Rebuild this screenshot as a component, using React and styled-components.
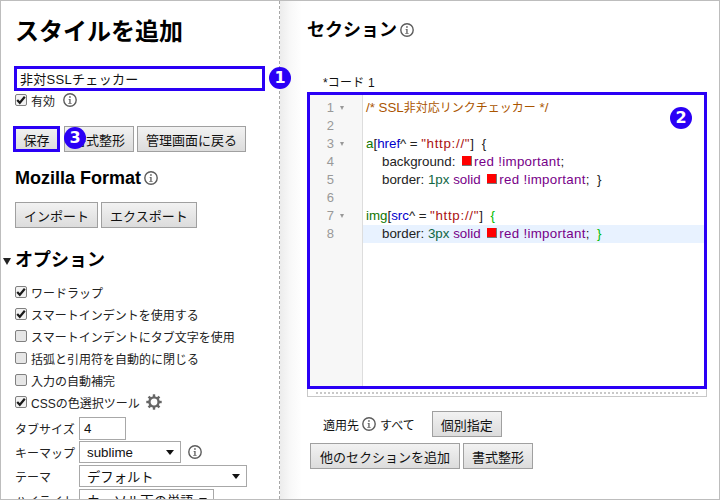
import React from "react";
import styled, { createGlobalStyle } from "styled-components";

const Global = createGlobalStyle`
  html, body { margin: 0; padding: 0; background: #fff; overflow: hidden; }
  body { font-family: "Liberation Sans", "Noto Sans CJK JP", Arial, sans-serif; font-size: 12px; color: #000; }
`;
const BLUE = "#2a00f5";

const Frame = styled.div`
  width: 720px; height: 500px; box-sizing: border-box; display: flex; overflow: hidden; position: relative;
  border: 1px solid #bdbdbd;
`;
const Side = styled.div`
  width: 279px; flex: none; box-sizing: border-box; height: 498px; overflow: hidden;
  border-right: 1px dashed #a8a8a8; padding: 0 0 0 14px; position: relative;
`;
const Main = styled.div`
  flex: 1; box-sizing: border-box; height: 498px; padding: 0 0 0 27px;
  background: linear-gradient(to right, #ececec 0, #f8f8f8 10px, #fff 22px);
`;
const Title = styled.h1`
  margin: 0; font-size: 24px; line-height: 32px; padding-top: 15px; font-weight: 700;
`;
const NameInput = styled.input`
  display: block; box-sizing: border-box; width: 251px; height: 25px; padding: 0 0 1px 3px; margin: 18px 0 0 -1px;
  font: 13px "Liberation Sans", "Noto Sans CJK JP", sans-serif; letter-spacing: 0.3px; color: #111;
  border: 3px solid ${BLUE}; outline: 0; background: #fff;
`;
const CheckRow = styled.div`
  display: flex; align-items: center; height: ${p => p.$h || 22}px; color: #222; white-space: nowrap;
`;
const Box = styled.span`
  width: 10px; height: 10px; flex: none; margin-right: 4px; border: 1px solid #808080; border-radius: 2px;
  background: ${p => (p.$on ? "#f2f2f2" : "#e6e6e6")}; display: flex; align-items: center; justify-content: center;
`;
const Gap = styled.span`width: ${p => p.$w}px; flex: none;`;
const Buttons = styled.div`
  display: flex; gap: 3px; margin-top: ${p => p.$mt || 0}px; margin-left: ${p => p.$ml || 0}px;
`;
const Button = styled.button`
  box-sizing: border-box; height: 26px; padding: 0 ${p => p.$pad || 8}px; margin: 0; color: #111; white-space: nowrap;
  font: 13px "Liberation Sans", "Noto Sans CJK JP", sans-serif;
  background: linear-gradient(#f2f2f2, #dcdcdc); border: 1px solid #a0a0a0; border-radius: 0;
`;
const SaveButton = styled(Button)`
  width: 47px; padding: 0; outline: 3px solid ${BLUE}; outline-offset: -3px;
  margin-right: 1px; margin-left: -2px;
`;
const H2 = styled.h2`
  margin: ${p => p.$mt || 0}px 0 0; font-size: 18px; line-height: 24px; font-weight: 700; display: flex; align-items: center; gap: 3px;
`;
const Caret = styled.span`
  position: absolute; left: 2px; top: 257px; width: 0; height: 0;
  border-left: 4px solid transparent; border-right: 4px solid transparent; border-top: 7px solid #222;
`;
const Spacer = styled.div`height: ${p => p.$h}px;`;
const FieldRow = styled.div`
  display: flex; align-items: center; height: 24px; color: #222; white-space: nowrap;
`;
const FieldLabel = styled.span`width: 64px; flex: none;`;
const NumberBox = styled.div`
  box-sizing: border-box; width: 47px; height: 23px; border: 1px solid #a8a8a8; padding: 0 4px; display: flex; align-items: center; color: #111; font-size: 13.33px;
`;
const Select = styled.div`
  box-sizing: border-box; width: ${p => p.$w}px; height: 22px; border: 1px solid #a8a8a8; padding: 0 6px 0 7px;
  display: flex; align-items: center; justify-content: space-between; color: #111; font-size: 13.33px; flex: none;
`;
const Tri = styled.span`
  width: 0; height: 0; border-left: 4.5px solid transparent; border-right: 4.5px solid transparent; border-top: 5px solid #111;
`;
const Badge = styled.span`
  position: absolute; left: ${p => p.$x}px; top: ${p => p.$y}px; width: 22px; height: 22px; border-radius: 50%;
  background: ${BLUE}; color: #fff; font-weight: 700; font-size: 16px; line-height: 22px; text-align: center;
  font-family: "DejaVu Sans", sans-serif; z-index: 3;
`;
const SectionTitle = styled(H2)`padding-top: 17px;`;
const CodeLabel = styled.div`margin-left: 16px; line-height: 14px; padding-top: 34px; color: #111; letter-spacing: 0.2px;`;
const EditorShell = styled.div`
  width: 400px; box-sizing: border-box; height: 305px; margin-top: 2px; border: 1px solid #c8c8c8; border-top: 0;
`;
const Editor = styled.div`
  box-sizing: border-box; height: 297px; width: 400px; margin-left: -1px; border: 3px solid ${BLUE}; display: flex; background: #fff;
`;
const Gutter = styled.div`
  width: 53px; flex: none; box-sizing: border-box; background: #f7f7f7; border-right: 1px solid #ddd; padding-top: 4px;
`;
const Num = styled.div`
  height: 18px; line-height: 18px; color: #999; position: relative; text-align: right; padding-right: 28px; font-size: 13px;
`;
const Fold = styled.span`
  position: absolute; left: 30px; top: 7px; width: 0; height: 0;
  border-left: 2.5px solid transparent; border-right: 2.5px solid transparent; border-top: 4px solid #999;
`;
const Code = styled.div`flex: 1; padding-top: 4px; min-width: 0;`;
const Line = styled.div`
  height: 18px; line-height: 18px; padding-left: ${p => (p.$indent ? 19 : 3)}px; white-space: pre; color: #222; font-size: 13.33px;
  background: ${p => (p.$active ? "#e8f2ff" : "transparent")};
`;
const T = styled.span`color: ${p => p.$c || "inherit"}; letter-spacing: ${p => p.$ls || 0}px;`;
const Cjk = styled.span`font-size: 12px;`;
const Swatch = styled.span`
  display: inline-block; width: 9px; height: 9px; background: #f00; border: 0 solid #777; border-width: 0 1px 1px 0; margin: 0 2px 0 3px;
`;
const Resizer = styled.div`
  margin: 3px 8px 0; border-top: 2px dotted #c8c8c8;
`;
const Apply = styled.div`
  display: flex; align-items: center; margin: 14px 0 0 16px; height: 26px; color: #111; white-space: nowrap;
`;

const Info = () => (
  <svg width="14" height="14" viewBox="0 0 14 14" style={{ flex: "none" }}>
    <circle cx="7" cy="7" r="6.2" fill="none" stroke="#5c5c5c" strokeWidth="1.4" />
    <path d="M5.6 5.9h2v4h1v.9H5.3v-.9h1v-3.1h-.7z" fill="#5c5c5c" />
    <rect x="6.2" y="3.2" width="1.5" height="1.6" fill="#5c5c5c" />
  </svg>
);
const Check = () => (
  <svg width="10" height="10" viewBox="0 0 10 10">
    <path d="M1.2 5 3.8 7.8 8.8 1.8" fill="none" stroke="#1a1a1a" strokeWidth="2.2" />
  </svg>
);
const Gear = () => (
  <svg width="16" height="16" viewBox="0 0 16 16" style={{ marginLeft: 6, flex: "none" }}>
    <circle cx="8" cy="8" r="4.6" fill="none" stroke="#666" strokeWidth="2.4" />
    {[0, 45, 90, 135, 180, 225, 270, 315].map(a => (
      <rect key={a} x="6.8" y="0.3" width="2.4" height="3" fill="#666" transform={`rotate(${a} 8 8)`} />
    ))}
  </svg>
);
const Opt = ({ on, children, gear, h }) => (
  <CheckRow $h={h}>
    <Box $on={on}>{on && <Check />}</Box>
    {children}
    {gear && <Gear />}
  </CheckRow>
);

const C = { com: "#a50", tag: "#170", attr: "#00c", str: "#a11", kw: "#708", num: "#164", br: "#0b0" };

export default function App() {
  return (
    <>
      <Global />
      <Frame>
        <Side>
          <Title>スタイルを追加</Title>
          <NameInput defaultValue="非対SSLチェッカー" />
          <Opt on h={18}>有効<Gap $w={8} /><Info /></Opt>
          <Buttons $mt={17}>
            <SaveButton>保存</SaveButton>
            <Button>書式整形</Button>
            <Button>管理画面に戻る</Button>
          </Buttons>
          <H2 $mt={14}>Mozilla Format<Info /></H2>
          <Buttons $mt={12}>
            <Button>インポート</Button>
            <Button>エクスポート</Button>
          </Buttons>
          <Caret />
          <H2 $mt={20}>オプション</H2>
          <Spacer $h={9} />
          <Opt on>ワードラップ</Opt>
          <Opt on>スマートインデントを使用する</Opt>
          <Opt>スマートインデントにタブ文字を使用</Opt>
          <Opt>括弧と引用符を自動的に閉じる</Opt>
          <Opt>入力の自動補完</Opt>
          <Opt on gear>CSSの色選択ツール</Opt>
          <Spacer $h={3} />
          <FieldRow><FieldLabel>タブサイズ</FieldLabel><NumberBox>4</NumberBox></FieldRow>
          <FieldRow><FieldLabel>キーマップ</FieldLabel><Select $w={102}>sublime<Tri /></Select><Gap $w={7} /><Info /></FieldRow>
          <FieldRow><FieldLabel>テーマ</FieldLabel><Select $w={168}>デフォルト<Tri /></Select></FieldRow>
          <FieldRow><FieldLabel>ハイライト</FieldLabel><Select $w={135}>カーソル下の単語<Tri /></Select></FieldRow>
        </Side>
        <Main>
          <SectionTitle>セクション<Info /></SectionTitle>
          <CodeLabel>*コード 1</CodeLabel>
          <EditorShell>
            <Editor>
              <Gutter>
                <Num>1<Fold /></Num><Num>2</Num><Num>3<Fold /></Num><Num>4</Num><Num>5</Num><Num>6</Num><Num>7<Fold /></Num><Num>8</Num>
              </Gutter>
              <Code>
                <Line><T $c={C.com}>/* SSL<Cjk>非対応リンクチェッカー</Cjk> */</T></Line>
                <Line />
                <Line><T $c={C.tag}>a</T>[<T $c={C.attr}>href</T><T $ls={3.5}>^=</T><T $c={C.str} $ls={0.7}>"http://"</T><T $ls={2}>] </T>{"{"}</Line>
                <Line $indent>background: <Swatch /><T $c={C.kw} $ls={0.3}>red !important</T>;</Line>
                <Line $indent>border: <T $c={C.num}>1px</T> <T $c={C.kw}>solid</T> <Swatch /><T $c={C.kw} $ls={0.3}>red !important</T><T $ls={2}>; </T>{"}"}</Line>
                <Line />
                <Line><T $c={C.tag}>img</T>[<T $c={C.attr}>src</T><T $ls={3.5}>^=</T><T $c={C.str} $ls={0.7}>"http://"</T><T $ls={2}>] </T><T $c={C.br}>{"{"}</T></Line>
                <Line $indent $active>border: <T $c={C.num}>3px</T> <T $c={C.kw}>solid</T> <Swatch /><T $c={C.kw} $ls={0.3}>red !important</T><T $ls={2}>; </T><T $c={C.br}>{"}"}</T></Line>
              </Code>
            </Editor>
            <Resizer />
          </EditorShell>
          <Apply>適用先<Gap $w={3} /><Info /><Gap $w={4} />すべて<Gap $w={17} /><Button>個別指定</Button></Apply>
          <Buttons $mt={6} $ml={3}>
            <Button $pad={9}>他のセクションを追加</Button>
            <Button>書式整形</Button>
          </Buttons>
        </Main>
        <Badge $x={268} $y={66}>1</Badge>
        <Badge $x={669} $y={106}>2</Badge>
        <Badge $x={63} $y={126}>3</Badge>
      </Frame>
    </>
  );
}
